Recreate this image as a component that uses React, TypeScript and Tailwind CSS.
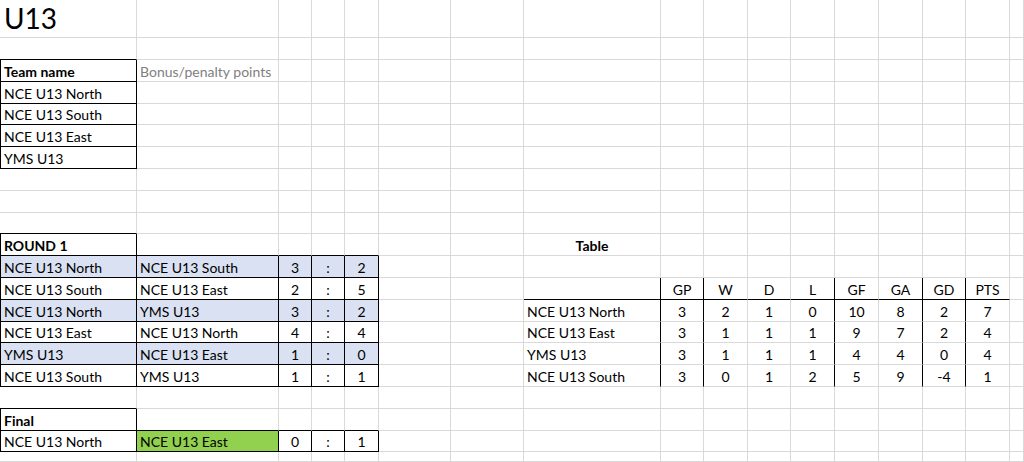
import React from 'react'

type CellData = { t: string; bold?: boolean; center?: boolean; muted?: boolean; title?: boolean }

const key = (r: number, c: number) => `${r}-${c}`

const content = new Map<string, CellData>()
const fill = new Map<string, 'blue' | 'green'>()
const blackR = new Set<string>()
const blackB = new Set<string>()
const blackL = new Set<string>()

// boxes with black borders round every cell
function box(r1: number, r2: number, c1: number, c2: number) {
  for (let r = r1; r <= r2; r++) {
    for (let c = c1; c <= c2; c++) {
      blackR.add(key(r, c))
      blackB.add(key(r, c))
      if (c === 0) blackL.add(key(r, c))
    }
  }
  for (let c = c1; c <= c2; c++) blackB.add(key(r1 - 1, c))
}

const put = (r: number, c: number, d: CellData) => content.set(key(r, c), d)

put(1, 0, { t: 'U13', title: true })
put(3, 0, { t: 'Team name', bold: true })
put(3, 1, { t: 'Bonus/penalty points', muted: true })
;['NCE U13 North', 'NCE U13 South', 'NCE U13 East', 'YMS U13'].forEach((t, i) => put(4 + i, 0, { t }))
box(3, 7, 0, 0)

put(11, 0, { t: 'ROUND 1', bold: true })
box(11, 11, 0, 0)

const matches: [string, string, number, number][] = [
  ['NCE U13 North', 'NCE U13 South', 3, 2],
  ['NCE U13 South', 'NCE U13 East', 2, 5],
  ['NCE U13 North', 'YMS U13', 3, 2],
  ['NCE U13 East', 'NCE U13 North', 4, 4],
  ['YMS U13', 'NCE U13 East', 1, 0],
  ['NCE U13 South', 'YMS U13', 1, 1],
]
matches.forEach(([home, away, h, a], i) => {
  const r = 12 + i
  put(r, 0, { t: home })
  put(r, 1, { t: away })
  put(r, 2, { t: String(h), center: true })
  put(r, 3, { t: ':', center: true })
  put(r, 4, { t: String(a), center: true })
  if (i % 2 === 0) for (let c = 0; c <= 4; c++) fill.set(key(r, c), 'blue')
})
box(12, 17, 0, 4)

put(19, 0, { t: 'Final', bold: true })
box(19, 19, 0, 0)
put(20, 0, { t: 'NCE U13 North' })
put(20, 1, { t: 'NCE U13 East' })
put(20, 2, { t: '0', center: true })
put(20, 3, { t: ':', center: true })
put(20, 4, { t: '1', center: true })
fill.set(key(20, 1), 'green')
box(20, 20, 0, 4)

// league table
put(11, 7, { t: 'Table', bold: true, center: true })
;['GP', 'W', 'D', 'L', 'GF', 'GA', 'GD', 'PTS'].forEach((t, i) => put(13, 8 + i, { t, center: true }))
const standings: [string, number[]][] = [
  ['NCE U13 North', [3, 2, 1, 0, 10, 8, 2, 7]],
  ['NCE U13 East', [3, 1, 1, 1, 9, 7, 2, 4]],
  ['YMS U13', [3, 1, 1, 1, 4, 4, 0, 4]],
  ['NCE U13 South', [3, 0, 1, 2, 5, 9, -4, 1]],
]
standings.forEach(([team, nums], i) => {
  put(14 + i, 7, { t: team })
  nums.forEach((n, j) => put(14 + i, 8 + j, { t: String(n), center: true }))
})
for (let c = 7; c <= 15; c++) blackB.add(key(13, c))
for (let r = 13; r <= 17; r++) [7, 8, 11, 13, 14].forEach((c) => blackR.add(key(r, c)))

const ROWS = 21
const COLS = 17

function Cell({ r, c }: { r: number; c: number }) {
  const k = key(r, c)
  const d = content.get(k)
  const bg = fill.get(k)
  return (
    <div
      className={[
        'flex min-w-0 items-end whitespace-nowrap border-b border-r px-[3px] leading-none',
        d?.title ? 'pb-[5px] pl-[4px] text-[28px]' : 'pb-[2px] text-[14px]',
        blackR.has(k) ? 'border-r-black' : 'border-r-[#d9d9d9]',
        blackB.has(k) ? 'border-b-black' : 'border-b-[#d9d9d9]',
        blackL.has(k) ? 'border-l border-l-black' : '',
        bg === 'blue' ? 'bg-[#d9e1f2]' : bg === 'green' ? 'bg-[#92d050]' : '',
        d?.center ? 'justify-center' : '',
        d?.bold ? 'font-bold' : '',
        d?.muted ? 'text-[#808080]' : 'text-black',
      ].join(' ')}
    >
      {d?.t}
    </div>
  )
}

export default function App() {
  const cells = []
  for (let r = 1; r <= ROWS; r++) {
    for (let c = 0; c < COLS; c++) cells.push(<Cell key={key(r, c)} r={r} c={c} />)
  }
  return (
    <div className="h-[462px] w-[1024px] overflow-hidden bg-white font-[Lato,'Liberation_Sans',sans-serif]">
      <div className="grid h-[462px] grid-cols-[137px_142px_33px_33px_34px_72px_73px_137px_43px_44px_43px_44px_44px_44px_43px_44px_1fr] grid-rows-[38.2px_repeat(19,21.8px)_1fr]">
        {cells}
      </div>
    </div>
  )
}
